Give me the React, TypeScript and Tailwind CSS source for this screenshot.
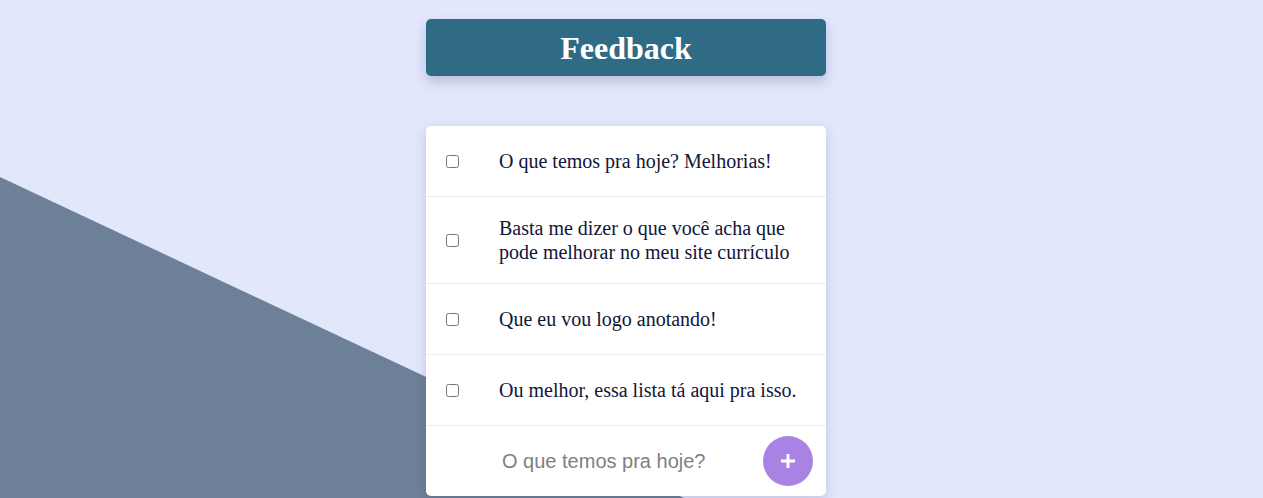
import React from "react";

const items = [
  "O que temos pra hoje? Melhorias!",
  "Basta me dizer o que você acha que pode melhorar no meu site currículo",
  "Que eu vou logo anotando!",
  "Ou melhor, essa lista tá aqui pra isso.",
];

const App = () => {
  return (
    <div className="relative min-h-[498px] h-[498px] overflow-hidden bg-[#e2e7fc]">
      {/* slate wedge behind everything */}
      <svg
        className="absolute inset-0 w-full h-full"
        viewBox="0 0 1263 498"
        preserveAspectRatio="none"
      >
        <polygon points="0,177 684,498 0,498" fill="#6c8097" />
      </svg>

      <div className="relative flex flex-col items-center pt-[19px] pr-[11px]">
        <div className="w-[400px] h-[57px] rounded-[5px] bg-[#306b85] shadow-[0_6px_12px_rgba(60,70,120,0.25)] flex items-center justify-center">
          <h1 className="text-white text-[32px] font-bold font-['Liberation_Serif',serif]">
            Feedback
          </h1>
        </div>

        <div className="mt-[50px] w-[400px] bg-white rounded-[5px] shadow-[0_4px_12px_rgba(60,70,120,0.2)] font-['Liberation_Serif',serif]">
          {items.map((text, i) => (
            <div
              key={i}
              className="flex items-center min-h-[71px] py-[19px] border-b border-[#ececf0]"
            >
              <div className="w-[73px] shrink-0 flex pl-[20px]">
                <input type="checkbox" className="w-[13px] h-[13px] accent-gray-500" />
              </div>
              <p className="text-[20px] leading-[24px] text-[#10163a] pr-[20px]">{text}</p>
            </div>
          ))}
          <div className="flex items-center h-[70px] pr-[13px]">
            <input
              className="flex-1 min-w-0 ml-[76px] text-[20px] text-[#555] placeholder-[#808080] outline-none bg-transparent font-['Liberation_Sans',sans-serif]"
              placeholder="O que temos pra hoje?"
            />
            <button className="w-[50px] h-[50px] shrink-0 rounded-full bg-[#a883e3] flex items-center justify-center">
              <svg width="18" height="18" viewBox="0 0 18 18">
                <path d="M9 2v14M2 9h14" stroke="white" strokeWidth="3" />
              </svg>
            </button>
          </div>
        </div>
      </div>
    </div>
  );
};

export default App;
